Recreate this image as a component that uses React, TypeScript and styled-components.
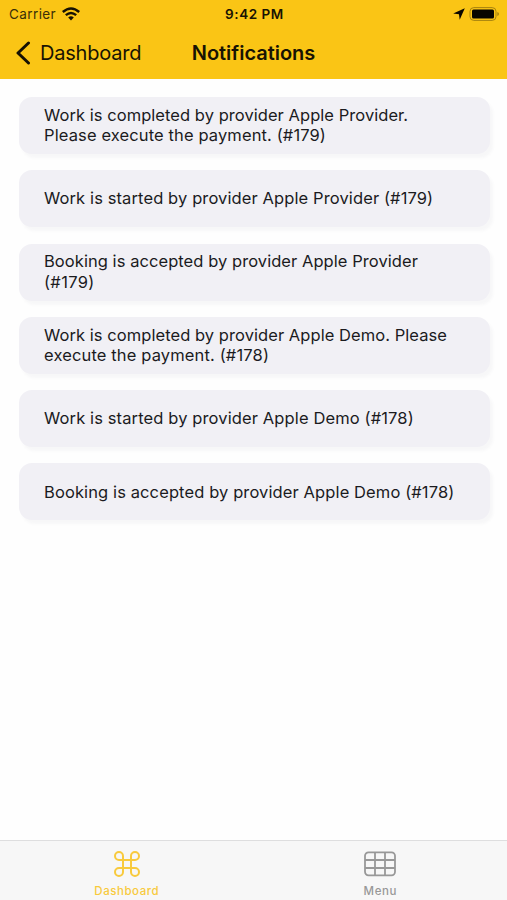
import React from "react";
import styled, { createGlobalStyle } from "styled-components";

const GlobalStyle = createGlobalStyle`
  * { box-sizing: border-box; }
  body { margin: 0; background: #fff; font-family: Inter, "Liberation Sans", sans-serif; color: #1b1b1e; }
`;

const Screen = styled.div`
  width: 507px;
  height: 900px;
  display: flex;
  flex-direction: column;
  overflow: hidden;
  background: #fefefe;
`;

const Header = styled.header`
  height: 79px;
  flex: none;
  background: #fac515;
  color: #181303;
`;

const StatusBar = styled.div`
  height: 27px;
  display: grid;
  grid-template-columns: 1fr auto 1fr;
  align-items: center;
  padding: 0 7px 0 9px;
`;

const Carrier = styled.div`
  display: flex;
  align-items: center;
  gap: 5.5px;
  font-size: 13.5px;
  letter-spacing: 0.4px;
  color: #3b2f08;
`;

const Clock = styled.div`
  font-size: 13.5px;
  font-weight: 600;
  letter-spacing: 0.55px;
`;

const StatusIcons = styled.div`
  display: flex;
  align-items: center;
  justify-content: flex-end;
  gap: 4px;
`;

const NavBar = styled.div`
  height: 52px;
  display: grid;
  grid-template-columns: 1fr auto 1fr;
  align-items: center;
  padding: 0 16px;
`;

const BackButton = styled.button`
  display: flex;
  align-items: center;
  gap: 9px;
  padding: 0;
  border: 0;
  background: none;
  color: inherit;
  font: 400 20px Inter, sans-serif;
  letter-spacing: -0.2px;
`;

const Title = styled.h1`
  margin: 0;
  font-size: 20px;
  font-weight: 600;
  letter-spacing: -0.02px;
`;

const List = styled.main`
  flex: 1;
  display: flex;
  flex-direction: column;
  gap: 16.3px;
  padding: 18px 17px 0 19px;
`;

const Card = styled.article`
  height: 57px;
  flex: none;
  display: flex;
  flex-direction: column;
  justify-content: center;
  padding: 0 25px 0.5px;
  border-radius: 13px;
  background: #f1f0f5;
  box-shadow: 3px 4px 3px rgba(90, 90, 115, 0.045);
`;

const Line = styled.span<{ $spacing: number }>`
  font-size: 16.5px;
  line-height: 20.4px;
  letter-spacing: ${(p) => p.$spacing}px;
  white-space: nowrap;
`;

const TabBar = styled.nav`
  height: 60px;
  flex: none;
  display: grid;
  grid-template-columns: 1fr 1fr;
  border-top: 1px solid #dededf;
  background: #f7f7f7;
`;

const Tab = styled.button<{ $active?: boolean }>`
  display: flex;
  flex-direction: column;
  align-items: center;
  gap: 7px;
  padding: 10px 0 0;
  border: 0;
  background: none;
  color: ${(p) => (p.$active ? "#f8ca3d" : "#989898")};
  font: 500 11.5px/15px Inter, sans-serif;
  letter-spacing: 0.55px;
`;

type TextLine = { text: string; spacing: number };

const notifications: TextLine[][] = [
  [
    { text: "Work is completed by provider Apple Provider.", spacing: 0.05 },
    { text: "Please execute the payment. (#179)", spacing: 0.12 },
  ],
  [{ text: "Work is started by provider Apple Provider (#179)", spacing: 0.11 }],
  [
    { text: "Booking is accepted by provider Apple Provider", spacing: 0.06 },
    { text: "(#179)", spacing: 0.35 },
  ],
  [
    { text: "Work is completed by provider Apple Demo. Please", spacing: 0.06 },
    { text: "execute the payment. (#178)", spacing: 0.14 },
  ],
  [{ text: "Work is started by provider Apple Demo (#178)", spacing: 0.12 }],
  [{ text: "Booking is accepted by provider Apple Demo (#178)", spacing: 0.11 }],
];

const WifiIcon = () => (
  <svg width="18" height="14" viewBox="0 0 18 14" fill="none" stroke="#171203" strokeWidth="2.4">
    <path d="M.8 5Q9-2.2 17.2 5" />
    <path d="M3.8 8.2Q9 3.7 14.2 8.2" />
    <path d="M6.2 10.5Q9 8 11.8 10.5L9 13.6Z" fill="#171203" stroke="none" />
  </svg>
);

const LocationIcon = () => (
  <svg width="12" height="12" viewBox="0 0 12 12" fill="#090700">
    <path d="M11.8.3 6.7 11.8 6 6.3.2 5.6Z" />
  </svg>
);

const BatteryIcon = () => (
  <svg width="31" height="14" viewBox="0 0 31 14" fill="none">
    <rect x="1" y=".6" width="26" height="12.8" rx="3.8" stroke="#a6820f" />
    <rect x="3" y="2.5" width="22" height="9" rx="1.500" fill="#080600" />
    <path d="M28.3 5v4Q30 8.400 30 7T28.3 5Z" fill="#a6820f" />
  </svg>
);

const BackIcon = () => (
  <svg width="15" height="24" viewBox="0 0 15 24" fill="none" stroke="#161103" strokeWidth="3" strokeLinecap="round" strokeLinejoin="round">
    <path d="M12.500 2 2 12l10.500 10" />
  </svg>
);

const CommandIcon = () => (
  <svg width="26" height="26" viewBox="0 0 26 26" fill="none" stroke="currentColor" strokeWidth="2">
    <path d="M9 9H5A4 4 0 1 1 9 5V21A4 4 0 1 1 5 17H21A4 4 0 1 1 17 21V5A4 4 0 1 1 21 9Z" />
  </svg>
);

const GridIcon = () => (
  <svg width="32" height="26" viewBox="0 0 32 26" fill="none" stroke="currentColor" strokeWidth="1.8">
    <rect x="1" y="1.300" width="30" height="23" rx="3.500" />
    <path d="M1 9h30M1 17h30M11 1.300v23M21 1.300v23" />
  </svg>
);

export default function App() {
  return (
    <>
      <GlobalStyle />
      <Screen>
        <Header>
          <StatusBar>
            <Carrier>Carrier <WifiIcon /></Carrier>
            <Clock>9:42 PM</Clock>
            <StatusIcons><LocationIcon /><BatteryIcon /></StatusIcons>
          </StatusBar>
          <NavBar>
            <BackButton><BackIcon />Dashboard</BackButton>
            <Title>Notifications</Title>
          </NavBar>
        </Header>
        <List>
          {notifications.map((lines, i) => (
            <Card key={i}>
              {lines.map((line) => (
                <Line key={line.text} $spacing={line.spacing}>{line.text}</Line>
              ))}
            </Card>
          ))}
        </List>
        <TabBar>
          <Tab $active><CommandIcon />Dashboard</Tab>
          <Tab><GridIcon />Menu</Tab>
        </TabBar>
      </Screen>
    </>
  );
}
